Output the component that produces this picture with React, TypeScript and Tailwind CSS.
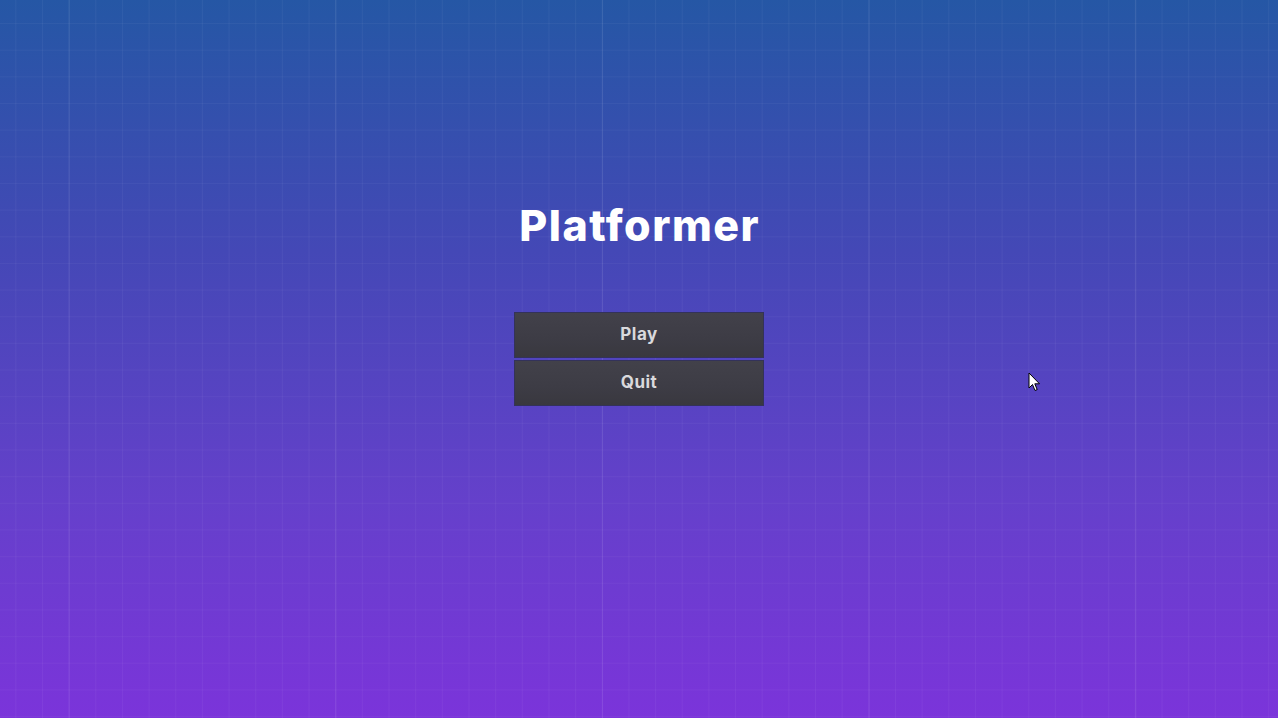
import React from "react";

function Cursor() {
  return (
    <svg width="13" height="20" viewBox="0 0 13 20" className="absolute left-[1028px] top-[372px]">
      <path d="M1 1 L1 16 L4.5 12.5 L7 18.5 L9.2 17.6 L6.8 11.8 L11.5 11.8 Z" fill="#ffffff" stroke="#000000" strokeWidth="1" strokeLinejoin="miter" />
    </svg>
  );
}

export default function App() {
  return (
    <div className="relative w-[1278px] h-[718px] overflow-hidden bg-[linear-gradient(180deg,#2557a5_0%,#4448b6_35%,#6540cb_70%,#7b34da_100%)] font-['Inter','Open_Sans',sans-serif]">
      <div className="absolute inset-0 bg-[linear-gradient(90deg,rgba(255,255,255,0.045)_1px,transparent_1px),linear-gradient(0deg,rgba(255,255,255,0.035)_1px,transparent_1px)] bg-[size:26.667px_26.667px] bg-[position:15.33px_24px]" />
      <div className="absolute inset-0 bg-[linear-gradient(90deg,rgba(255,255,255,0.07)_1px,transparent_1px)] bg-[size:266.667px_100%] bg-[position:68.67px_0]" />
      <div className="relative flex flex-col items-center pt-[199px]">
        <h1 className="text-[43px] leading-[52px] font-extrabold text-white tracking-[1.5px] pl-[1.5px]">Platformer</h1>
        <div className="mt-[61px] flex flex-col gap-[2px]">
          <button className="w-[250px] h-[46px] pb-[1px] border border-[#33325a] bg-[linear-gradient(180deg,#42414a_0%,#3d3c45_60%,#39383f_100%)] text-[#d9d9dc] text-[17px] tracking-[0.5px] font-bold">Play</button>
          <button className="w-[250px] h-[46px] pb-[1px] border border-[#33325a] bg-[linear-gradient(180deg,#42414a_0%,#3d3c45_60%,#39383f_100%)] text-[#d9d9dc] text-[17px] tracking-[0.5px] font-bold">Quit</button>
        </div>
      </div>
      <Cursor />
    </div>
  );
}
